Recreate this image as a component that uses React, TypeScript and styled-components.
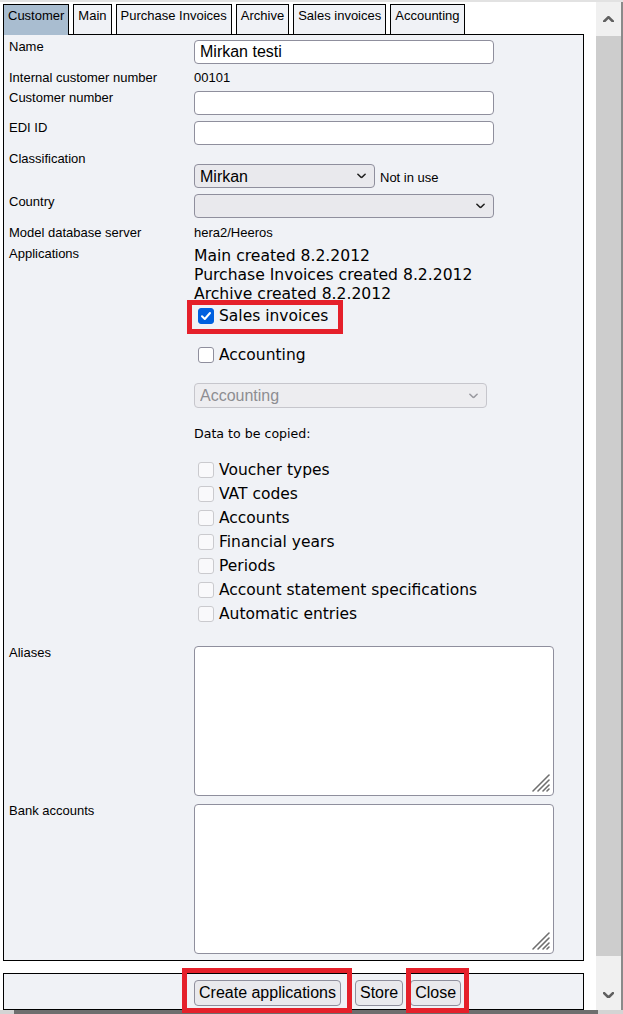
import React from 'react';
import styled, { createGlobalStyle } from 'styled-components';

const GlobalStyle = createGlobalStyle`
  html, body {
    margin: 0;
    padding: 0;
    background: #fff;
  }
  body {
    font-family: "Liberation Sans", Arial, sans-serif;
    color: #000;
  }
`;

const TABS = ['Customer', 'Main', 'Purchase Invoices', 'Archive', 'Sales invoices', 'Accounting'];
const APPS = ['Main created 8.2.2012', 'Purchase Invoices created 8.2.2012', 'Archive created 8.2.2012'];
const COPY_ITEMS = [
  'Voucher types',
  'VAT codes',
  'Accounts',
  'Financial years',
  'Periods',
  'Account statement specifications',
  'Automatic entries',
];

const Chevron = ({ up, color = '#222', size = 9, stroke = 1.6 }: { up?: boolean; color?: string; size?: number; stroke?: number }) => (
  <svg width={size} height={size * 0.6} viewBox="0 0 10 6" fill="none">
    <polyline
      points={up ? '1,5 5,1 9,5' : '1,1 5,5 9,1'}
      stroke={color}
      strokeWidth={stroke * (10 / size)}
      strokeLinecap="round"
      strokeLinejoin="round"
    />
  </svg>
);

const Grip = () => (
  <svg width="20" height="20" viewBox="0 0 20 20">
    <g stroke="#6f6f6f" strokeWidth="1.6" strokeLinecap="round">
      <line x1="2" y1="18" x2="18" y2="2" />
      <line x1="7" y1="18" x2="18" y2="7" />
      <line x1="12" y1="18" x2="18" y2="12" />
      <line x1="16" y1="18" x2="18" y2="16" />
    </g>
  </svg>
);

const CheckMark = () => (
  <svg width="12" height="12" viewBox="0 0 12 12" fill="none">
    <polyline points="2,6.3 4.8,9 10,3" stroke="#fff" strokeWidth="2" strokeLinecap="round" strokeLinejoin="round" />
  </svg>
);

export default function App() {
  return (
    <>
      <GlobalStyle />
      <Frame>
        <Body>
          <Page>
            <TabBar>
              {TABS.map((t, i) => (
                <Tab key={t} $active={i === 0}>{t}</Tab>
              ))}
            </TabBar>
            <Panel>
              <Row>
                <Label>Name</Label>
                <div><TextInput defaultValue="Mirkan testi" /></div>
              </Row>
              <Row $mt={7}>
                <Label>Internal customer number</Label>
                <PlainValue>00101</PlainValue>
              </Row>
              <Row $mt={6}>
                <Label>Customer number</Label>
                <div><TextInput /></div>
              </Row>
              <Row $mt={6}>
                <Label>EDI ID</Label>
                <div><TextInput /></div>
              </Row>
              <Row $mt={7}>
                <Label>Classification</Label>
                <InlineLine $mt={12}>
                  <SelectWrap $w={181}>
                    <NativeSelect defaultValue="Mirkan">
                      <option>Mirkan</option>
                    </NativeSelect>
                    <ChevronSlot><Chevron /></ChevronSlot>
                  </SelectWrap>
                  <SideNote>Not in use</SideNote>
                </InlineLine>
              </Row>
              <Row $mt={6}>
                <Label $pt={1}>Country</Label>
                <div>
                  <SelectWrap $w={300}>
                    <NativeSelect defaultValue="">
                      <option value=""></option>
                    </NativeSelect>
                    <ChevronSlot><Chevron /></ChevronSlot>
                  </SelectWrap>
                </div>
              </Row>
              <Row $mt={8}>
                <Label>Model database server</Label>
                <PlainValue>hera2/Heeros</PlainValue>
              </Row>
              <Row $mt={7}>
                <Label>Applications</Label>
                <div>
                  <AppLines>
                    {APPS.map(a => <div key={a}>{a}</div>)}
                  </AppLines>
                  <Anchor $mt={1}>
                    <CheckRow $h={22}>
                      <Box $checked><CheckMark /></Box>
                      <CheckText>Sales invoices</CheckText>
                    </CheckRow>
                    <Highlight $t={-5} $l={-7} $r={-15} $b={-7} />
                  </Anchor>
                  <CheckRow $h={22} $mt={17}>
                    <Box />
                    <CheckText>Accounting</CheckText>
                  </CheckRow>
                  <SelectWrap $w={293} $h={25} $mt={17}>
                    <NativeSelect disabled defaultValue="Accounting">
                      <option>Accounting</option>
                    </NativeSelect>
                    <ChevronSlot><Chevron color="#9a9aa0" /></ChevronSlot>
                  </SelectWrap>
                  <SmallNote>Data to be copied:</SmallNote>
                  <CopyList>
                    {COPY_ITEMS.map(item => (
                      <CheckRow key={item} $h={24}>
                        <Box $disabled />
                        <CheckText>{item}</CheckText>
                      </CheckRow>
                    ))}
                  </CopyList>
                </div>
              </Row>
              <Row $mt={20}>
                <Label>Aliases</Label>
                <AreaWrap>
                  <TextArea />
                  <GripSlot><Grip /></GripSlot>
                </AreaWrap>
              </Row>
              <Row $mt={8}>
                <Label>Bank accounts</Label>
                <AreaWrap>
                  <TextArea />
                  <GripSlot><Grip /></GripSlot>
                </AreaWrap>
              </Row>
            </Panel>
            <Footer>
              <Anchor>
                <Button type="button">Create applications</Button>
                <Highlight $t={-12} $l={-12} $r={-11} $b={-7} />
              </Anchor>
              <Anchor $ml={14}>
                <Button type="button">Store</Button>
              </Anchor>
              <Anchor $ml={7}>
                <Button type="button">Close</Button>
                <Highlight $t={-12} $l={-4} $r={-8} $b={-7} />
              </Anchor>
            </Footer>
          </Page>
          <ScrollBar>
            <ArrowCell $h={34}><Chevron up color="#606060" size={11} stroke={2.6} /></ArrowCell>
            <Thumb />
            <ArrowCell $h={30} $push><Chevron color="#606060" size={11} stroke={2.6} /></ArrowCell>
          </ScrollBar>
        </Body>
        <BottomEdge />
      </Frame>
    </>
  );
}

const Frame = styled.div`
  width: 623px;
  height: 1014px;
  box-sizing: border-box;
  border-top: 2px solid #e2e2e2;
  display: flex;
  flex-direction: column;
  overflow: hidden;
`;

const Body = styled.div`
  display: flex;
  flex: 1;
  min-height: 0;
`;

const Page = styled.div`
  width: 596px;
  box-sizing: border-box;
  padding: 2px 0 0 3px;
  display: flex;
  flex-direction: column;
`;

const TabBar = styled.div`
  display: flex;
  gap: 4px;
  height: 30px;
`;

const Tab = styled.div<{ $active?: boolean }>`
  position: relative;
  z-index: ${p => (p.$active ? 1 : 0)};
  box-sizing: border-box;
  height: ${p => (p.$active ? 31 : 30)}px;
  padding: 3px 4px 0;
  border: 1px solid #000;
  border-bottom: none;
  background: ${p => (p.$active ? '#a9bdd0' : '#f0f2f6')};
  font-size: 13px;
  line-height: 15px;
  white-space: nowrap;
`;

const Panel = styled.div`
  width: 581px;
  box-sizing: border-box;
  border: 1px solid #000;
  background: #f0f2f6;
  padding: 5px 0 6px 5px;
`;

const Row = styled.div<{ $mt?: number }>`
  display: grid;
  grid-template-columns: 185px 1fr;
  align-items: start;
  margin-top: ${p => p.$mt ?? 0}px;
`;

const Label = styled.div<{ $pt?: number }>`
  font-size: 13px;
  line-height: 14px;
  padding-top: ${p => p.$pt ?? 0}px;
`;

const PlainValue = styled.div`
  font-size: 13px;
  line-height: 14px;
`;

const TextInput = styled.input`
  display: block;
  width: 300px;
  height: 24px;
  box-sizing: border-box;
  border: 1px solid #8f8f9d;
  border-radius: 4px;
  background: #fff;
  padding: 0 5px;
  font-family: "Liberation Sans", Arial, sans-serif;
  font-size: 16px;
  color: #000;
  outline: none;
`;

const InlineLine = styled.div<{ $mt?: number }>`
  display: flex;
  align-items: center;
  gap: 5px;
  margin-top: ${p => p.$mt ?? 0}px;
`;

const SideNote = styled.span`
  font-size: 13px;
  line-height: 14px;
  padding-top: 4px;
`;

const SelectWrap = styled.div<{ $w: number; $h?: number; $mt?: number }>`
  position: relative;
  width: ${p => p.$w}px;
  height: ${p => p.$h ?? 24}px;
  margin-top: ${p => p.$mt ?? 0}px;
`;

const NativeSelect = styled.select`
  appearance: none;
  -webkit-appearance: none;
  width: 100%;
  height: 100%;
  box-sizing: border-box;
  border: 1px solid #8f8f9d;
  border-radius: 4px;
  background: #e9e9ed;
  padding: 0 24px 0 5px;
  font-family: "Liberation Sans", Arial, sans-serif;
  font-size: 16px;
  color: #000;
  outline: none;

  &:disabled {
    background: #ededf0;
    border-color: #c6c6cc;
    color: #8d8d92;
    opacity: 1;
  }
`;

const ChevronSlot = styled.span`
  position: absolute;
  right: 9px;
  top: 50%;
  transform: translateY(-50%);
  display: flex;
  pointer-events: none;
`;

const AppLines = styled.div`
  font-family: "DejaVu Sans", Verdana, sans-serif;
  font-size: 15.6px;
  line-height: 19px;
`;

const Anchor = styled.div<{ $mt?: number; $ml?: number }>`
  position: relative;
  display: inline-flex;
  margin-top: ${p => p.$mt ?? 0}px;
  margin-left: ${p => p.$ml ?? 0}px;
  vertical-align: top;
`;

const Highlight = styled.span<{ $t: number; $l: number; $r: number; $b: number }>`
  position: absolute;
  top: ${p => p.$t}px;
  left: ${p => p.$l}px;
  right: ${p => p.$r}px;
  bottom: ${p => p.$b}px;
  border: 5px solid #e5202a;
  pointer-events: none;
`;

const CheckRow = styled.div<{ $h: number; $mt?: number }>`
  display: flex;
  align-items: center;
  height: ${p => p.$h}px;
  margin-top: ${p => p.$mt ?? 0}px;
`;

const Box = styled.span<{ $checked?: boolean; $disabled?: boolean }>`
  width: 16px;
  height: 16px;
  box-sizing: border-box;
  margin: 0 5px 0 4px;
  border-radius: 3px;
  display: flex;
  align-items: center;
  justify-content: center;
  flex-shrink: 0;
  border: 1px solid ${p => (p.$checked ? '#0060df' : p.$disabled ? '#cacace' : '#8f8f9d')};
  background: ${p => (p.$checked ? '#0060df' : p.$disabled ? '#f9f9fb' : '#fff')};
`;

const CheckText = styled.span`
  font-family: "DejaVu Sans", Verdana, sans-serif;
  font-size: 15.5px;
  line-height: 19px;
  white-space: nowrap;
`;

const SmallNote = styled.div`
  margin-top: 18px;
  font-family: "DejaVu Sans", Verdana, sans-serif;
  font-size: 12.6px;
  line-height: 15px;
`;

const CopyList = styled.div`
  margin-top: 17px;
`;

const AreaWrap = styled.div`
  position: relative;
  width: 360px;
  height: 150px;
`;

const TextArea = styled.textarea`
  display: block;
  width: 100%;
  height: 100%;
  box-sizing: border-box;
  border: 1px solid #8f8f9d;
  border-radius: 4px;
  background: #fff;
  resize: none;
  outline: none;
  margin: 0;
`;

const GripSlot = styled.span`
  position: absolute;
  right: 3px;
  bottom: 3px;
  display: flex;
  pointer-events: none;
`;

const Footer = styled.div`
  width: 581px;
  height: 37px;
  box-sizing: border-box;
  margin-top: 12px;
  border: 1px solid #000;
  background: #f0f2f6;
  padding: 6px 0 0 190px;
  display: flex;
  align-items: flex-start;
`;

const Button = styled.button`
  height: 26px;
  box-sizing: border-box;
  padding: 0 4px;
  border: 1px solid #8f8f9d;
  border-radius: 4px;
  background: #e9e9ed;
  font-family: "Liberation Sans", Arial, sans-serif;
  font-size: 16px;
  color: #000;
  white-space: nowrap;
`;

const ScrollBar = styled.div`
  width: 25px;
  background: #f0f0f0;
  border-right: 2px solid #8a8a8a;
  display: flex;
  flex-direction: column;
`;

const ArrowCell = styled.div<{ $h: number; $push?: boolean }>`
  height: ${p => p.$h}px;
  display: flex;
  align-items: center;
  justify-content: center;
  margin-top: ${p => (p.$push ? 'auto' : '0')};
`;

const Thumb = styled.div`
  height: 920px;
  background: #cdcdcd;
`;

const BottomEdge = styled.div`
  height: 4px;
  background: linear-gradient(to right, #d4d4d4 0 14px, #6e6e6e 14px 598px, #d4d4d4 598px);
`;
